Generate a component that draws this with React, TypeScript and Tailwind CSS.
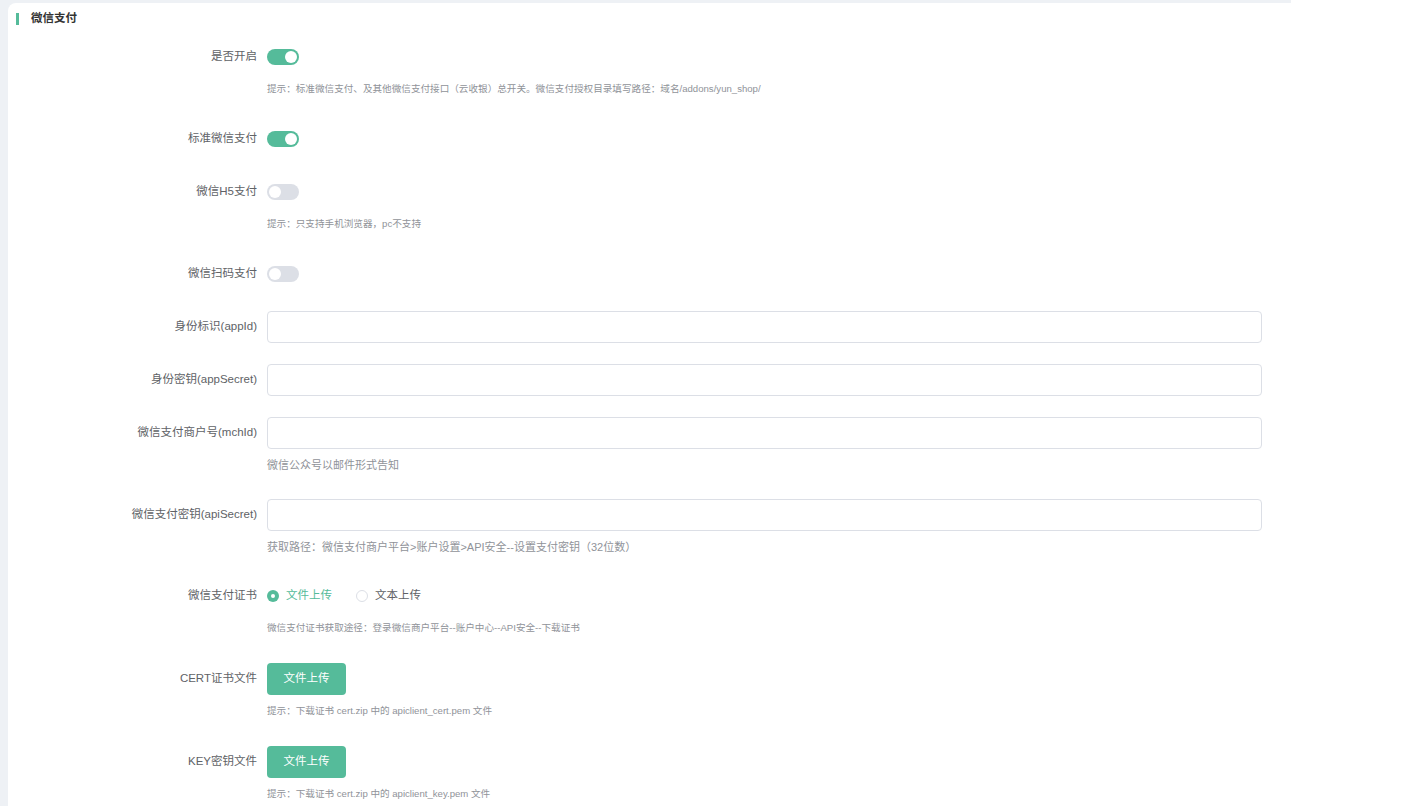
import React from 'react';

const green = 'bg-[#55bb9a]';

type Item = {
    label: string;
    kind: 'switch' | 'input' | 'radio' | 'upload';
    on?: boolean;
    hint?: string;
    hintClass?: string;
};

const small = 'mt-[8px] mb-[5px] leading-[16px] text-[9.6px] text-[#909399]';

const items: Item[] = [
    { label: '是否开启', kind: 'switch', on: true, hint: '提示：标准微信支付、及其他微信支付接口（云收银）总开关。微信支付授权目录填写路径：域名/addons/yun_shop/', hintClass: small },
    { label: '标准微信支付', kind: 'switch', on: true },
    { label: '微信H5支付', kind: 'switch', on: false, hint: '提示：只支持手机浏览器，pc不支持', hintClass: small },
    { label: '微信扫码支付', kind: 'switch', on: false },
    { label: '身份标识(appId)', kind: 'input' },
    { label: '身份密钥(appSecret)', kind: 'input' },
    { label: '微信支付商户号(mchId)', kind: 'input', hint: '微信公众号以邮件形式告知', hintClass: 'mt-[8px] mb-[5px] leading-[16px] text-[11px] text-[#909399]' },
    { label: '微信支付密钥(apiSecret)', kind: 'input', hint: '获取路径：微信支付商户平台>账户设置>API安全--设置支付密钥（32位数）', hintClass: 'mt-[8px] mb-[4px] leading-[16px] text-[11px] text-[#909399]' },
    { label: '微信支付证书', kind: 'radio', hint: '微信支付证书获取途径：登录微信商户平台--账户中心--API安全--下载证书', hintClass: 'mt-[8px] mb-[6px] leading-[16px] text-[9.6px] text-[#909399]' },
    { label: 'CERT证书文件', kind: 'upload', hint: '提示：下载证书 cert.zip 中的 apiclient_cert.pem 文件', hintClass: 'mt-[8px] mb-[6px] leading-[16px] text-[9.6px] text-[#909399]' },
    { label: 'KEY密钥文件', kind: 'upload', hint: '提示：下载证书 cert.zip 中的 apiclient_key.pem 文件', hintClass: 'mt-[8px] mb-[6px] leading-[16px] text-[9.6px] text-[#909399]' },
];

const Switch: React.FC<{ on?: boolean }> = ({ on }) => (
    <div className={`relative w-[32px] h-[16px] rounded-full ${on ? green : 'bg-[#dcdfe6]'}`}>
        <div className={`absolute top-[2px] w-[12px] h-[12px] rounded-full bg-white ${on ? 'left-[18px]' : 'left-[2px]'}`} />
    </div>
);

const Control: React.FC<{ item: Item }> = ({ item }) => {
    if (item.kind === 'switch') return <Switch on={item.on} />;
    if (item.kind === 'input')
        return <div className="w-[995px] h-[32px] border border-[#dcdfe6] rounded-[4px] bg-white" />;
    if (item.kind === 'upload')
        return (
            <button className={`w-[79px] h-[32px] rounded-[4px] ${green} text-white text-[11.5px]`}>文件上传</button>
        );
    return (
        <div className="flex items-center text-[11.5px]">
            <div className="flex items-center gap-[7px] text-[#55bb9a]">
                <span className={`w-[12px] h-[12px] rounded-full ${green} flex items-center justify-center`}>
                    <span className="w-[4px] h-[4px] rounded-full bg-white" />
                </span>
                文件上传
            </div>
            <div className="flex items-center gap-[7px] text-[#606266] ml-[24px]">
                <span className="w-[12px] h-[12px] rounded-full border border-[#dcdfe6] bg-white" />
                文本上传
            </div>
        </div>
    );
};

export default function App() {
    return (
        <div
            className="h-[806px] overflow-hidden bg-white"
            style={{ fontFamily: '"Liberation Sans", "Noto Sans CJK SC", sans-serif' }}
        >
            <div className="w-[1291px] min-h-[806px] bg-[#eef1f5] pl-[8px] pt-[3px] flex">
                <div className="flex-1 bg-white rounded-tl-[8px] pb-[20px]">
                    {/* title */}
                    <div className="flex items-center h-[18px] mt-[7px] mb-[13px] pl-[8px]">
                        <div className={`w-[3px] h-[12px] ${green}`} />
                        <div className="ml-[12px] text-[11.5px] font-bold text-[#333]">微信支付</div>
                    </div>

                    {items.map((item) => (
                        <div key={item.label} className="flex mb-[21px]">
                            <div className="w-[259px] pr-[10px] h-[32px] flex items-center justify-end text-[11.5px] text-[#606266] whitespace-nowrap">
                                {item.label}
                            </div>
                            <div>
                                <div className="h-[32px] flex items-center">
                                    <Control item={item} />
                                </div>
                                {item.hint && <div className={item.hintClass}>{item.hint}</div>}
                            </div>
                        </div>
                    ))}
                </div>
            </div>
        </div>
    );
}
